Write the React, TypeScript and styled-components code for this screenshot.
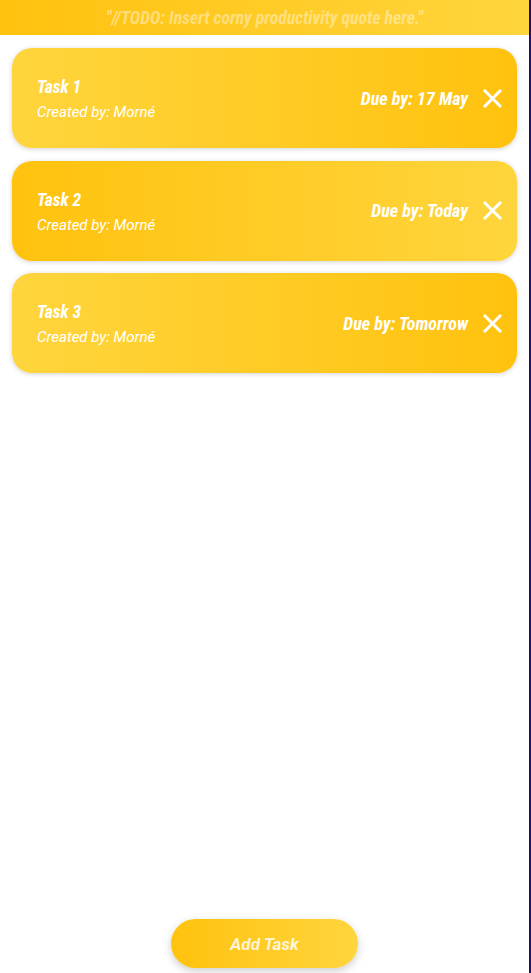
import React from 'react';
import styled, { createGlobalStyle } from 'styled-components';

const GlobalStyle = createGlobalStyle`
	html, body {
		margin: 0;
		padding: 0;
		background: #ffffff;
		font-family: Roboto, 'Liberation Sans', sans-serif;
	}
`;

const YELLOW_DARK = '#ffc20e';
const YELLOW_LIGHT = '#ffd53d';

type Task = {
	id: number;
	title: string;
	author: string;
	due: string;
};

const TASKS: Task[] = [
	{ id: 1, title: 'Task 1', author: 'Morné', due: '17 May' },
	{ id: 2, title: 'Task 2', author: 'Morné', due: 'Today' },
	{ id: 3, title: 'Task 3', author: 'Morné', due: 'Tomorrow' },
];

const CloseIcon: React.FC = () => (
	<svg width="19" height="19" viewBox="0 0 19 19" fill="none">
		<path d="M2 2L17 17M17 2L2 17" stroke="#ffffff" strokeWidth="3" strokeLinecap="square" />
	</svg>
);

const App: React.FC = () => {
	return (
		<>
			<GlobalStyle />
			<Page>
				<QuoteBar>"//TODO: Insert corny productivity quote here."</QuoteBar>
				<TaskList>
					{TASKS.map((task, i) => (
						<TaskCard key={task.id} flipped={i % 2 === 1}>
							<TaskInfo>
								<TaskTitle>{task.title}</TaskTitle>
								<TaskAuthor>Created by: {task.author}</TaskAuthor>
							</TaskInfo>
							<TaskActions>
								<DueDate>Due by: {task.due}</DueDate>
								<RemoveButton aria-label="Remove task">
									<CloseIcon />
								</RemoveButton>
							</TaskActions>
						</TaskCard>
					))}
				</TaskList>
				<Footer>
					<AddButton>Add Task</AddButton>
				</Footer>
			</Page>
		</>
	);
};

const Page = styled.div`
	display: flex;
	flex-direction: column;
	min-height: 100vh;
	box-sizing: border-box;
	border-right: 2px solid #1e0f6b;
`;

const condensed = `'Liberation Sans Narrow', 'Roboto Condensed', 'DejaVu Sans Condensed', Roboto, sans-serif`;

const QuoteBar = styled.div`
	height: 35px;
	display: flex;
	align-items: center;
	justify-content: center;
	background: linear-gradient(90deg, ${YELLOW_DARK}, ${YELLOW_LIGHT});
	color: rgba(255, 255, 255, 0.42);
	font-family: ${condensed};
	font-weight: 700;
	font-style: italic;
	font-size: 17.7px;
`;

const TaskList = styled.div`
	display: flex;
	flex-direction: column;
	gap: 12.5px;
	padding: 13px 12px 0 12px;
`;

const TaskCard = styled.div<{ flipped: boolean }>`
	height: 100px;
	box-sizing: border-box;
	display: flex;
	align-items: center;
	justify-content: space-between;
	padding: 0 15px 0 25px;
	border-radius: 20px;
	background: linear-gradient(
		90deg,
		${(props) => (props.flipped ? YELLOW_DARK : YELLOW_LIGHT)},
		${(props) => (props.flipped ? YELLOW_LIGHT : YELLOW_DARK)}
	);
	box-shadow: 0 1px 5px rgba(0, 0, 0, 0.18);
	color: #ffffff;
`;

const TaskInfo = styled.div`
	display: flex;
	flex-direction: column;
	gap: 6px;
	margin-top: 2px;
`;

const TaskTitle = styled.div`
	font-family: ${condensed};
	font-weight: 700;
	font-style: italic;
	font-size: 17.5px;
`;

const TaskAuthor = styled.div`
	font-style: italic;
	font-size: 15px;
`;

const TaskActions = styled.div`
	display: flex;
	align-items: center;
	gap: 15px;
`;

const DueDate = styled.div`
	font-family: ${condensed};
	font-weight: 700;
	font-style: italic;
	font-size: 18px;
`;

const RemoveButton = styled.button`
	display: flex;
	padding: 0;
	border: none;
	background: none;
	cursor: pointer;
`;

const Footer = styled.div`
	margin-top: auto;
	display: flex;
	justify-content: center;
	padding-bottom: 5px;
`;

const AddButton = styled.button`
	width: 187px;
	height: 49px;
	border: none;
	border-radius: 25px;
	background: linear-gradient(90deg, ${YELLOW_DARK}, ${YELLOW_LIGHT});
	box-shadow: 0 3px 8px rgba(0, 0, 0, 0.2);
	color: rgba(255, 255, 255, 0.82);
	font-family: Roboto, sans-serif;
	font-weight: 700;
	font-style: italic;
	font-size: 17px;
	cursor: pointer;
`;

export default App;
